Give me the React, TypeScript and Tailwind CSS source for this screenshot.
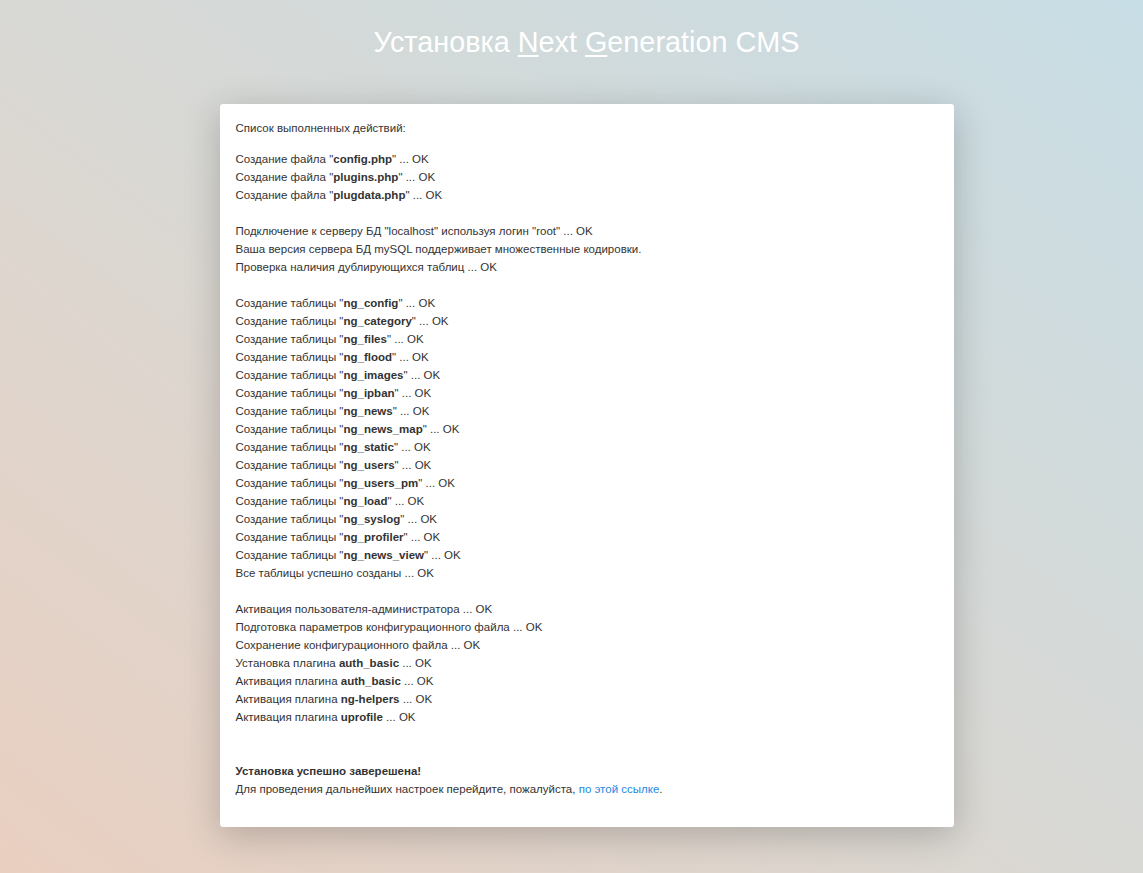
const files = ["config.php", "plugins.php", "plugdata.php"];

const tables = [
  "ng_config",
  "ng_category",
  "ng_files",
  "ng_flood",
  "ng_images",
  "ng_ipban",
  "ng_news",
  "ng_news_map",
  "ng_static",
  "ng_users",
  "ng_users_pm",
  "ng_load",
  "ng_syslog",
  "ng_profiler",
  "ng_news_view",
];

function Blank() {
  return <div className="h-[18px]"></div>;
}

export default function App() {
  return (
    <div
      className="min-h-screen bg-gradient-to-tr from-[#e9cfc0] via-[#d8d8d4] to-[#c7dde5] pl-[30px] pb-[46px] text-[#333]"
      style={{ fontFamily: '"Liberation Sans", Arial, sans-serif' }}
    >
      <h1 className="pt-[22px] pb-[42px] text-center text-[28.8px] leading-[40px] text-white">
        Установка <u className="underline-offset-[3px]">N</u>ext{" "}
        <u className="underline-offset-[3px]">G</u>eneration CMS
      </h1>

      <div className="mx-auto w-[734px] rounded-[3px] bg-white px-4 pt-[15px] pb-[29px] text-[11.5px] leading-[18px] shadow-[0_8px_36px_rgba(0,0,0,0.22)]">
        <p className="mb-[13px]">Список выполненных действий:</p>

        {files.map((f) => (
          <div key={f}>
            Создание файла "<b>{f}</b>" ... OK
          </div>
        ))}
        <Blank />
        <div>Подключение к серверу БД "localhost" используя логин "root" ... OK</div>
        <div>Ваша версия сервера БД mySQL поддерживает множественные кодировки.</div>
        <div>Проверка наличия дублирующихся таблиц ... OK</div>
        <Blank />
        {tables.map((t) => (
          <div key={t}>
            Создание таблицы "<b>{t}</b>" ... OK
          </div>
        ))}
        <div>Все таблицы успешно созданы ... OK</div>
        <Blank />
        <div>Активация пользователя-администратора ... OK</div>
        <div>Подготовка параметров конфигурационного файла ... OK</div>
        <div>Сохранение конфигурационного файла ... OK</div>
        <div>
          Установка плагина <b>auth_basic</b> ... OK
        </div>
        <div>
          Активация плагина <b>auth_basic</b> ... OK
        </div>
        <div>
          Активация плагина <b>ng-helpers</b> ... OK
        </div>
        <div>
          Активация плагина <b>uprofile</b> ... OK
        </div>
        <Blank />
        <Blank />
        <div className="font-bold">Установка успешно заверешена!</div>
        <div>
          Для проведения дальнейших настроек перейдите, пожалуйста,{" "}
          <a href="#" className="text-[#1e88e5]">
            по этой ссылке
          </a>
          .
        </div>
      </div>
    </div>
  );
}
